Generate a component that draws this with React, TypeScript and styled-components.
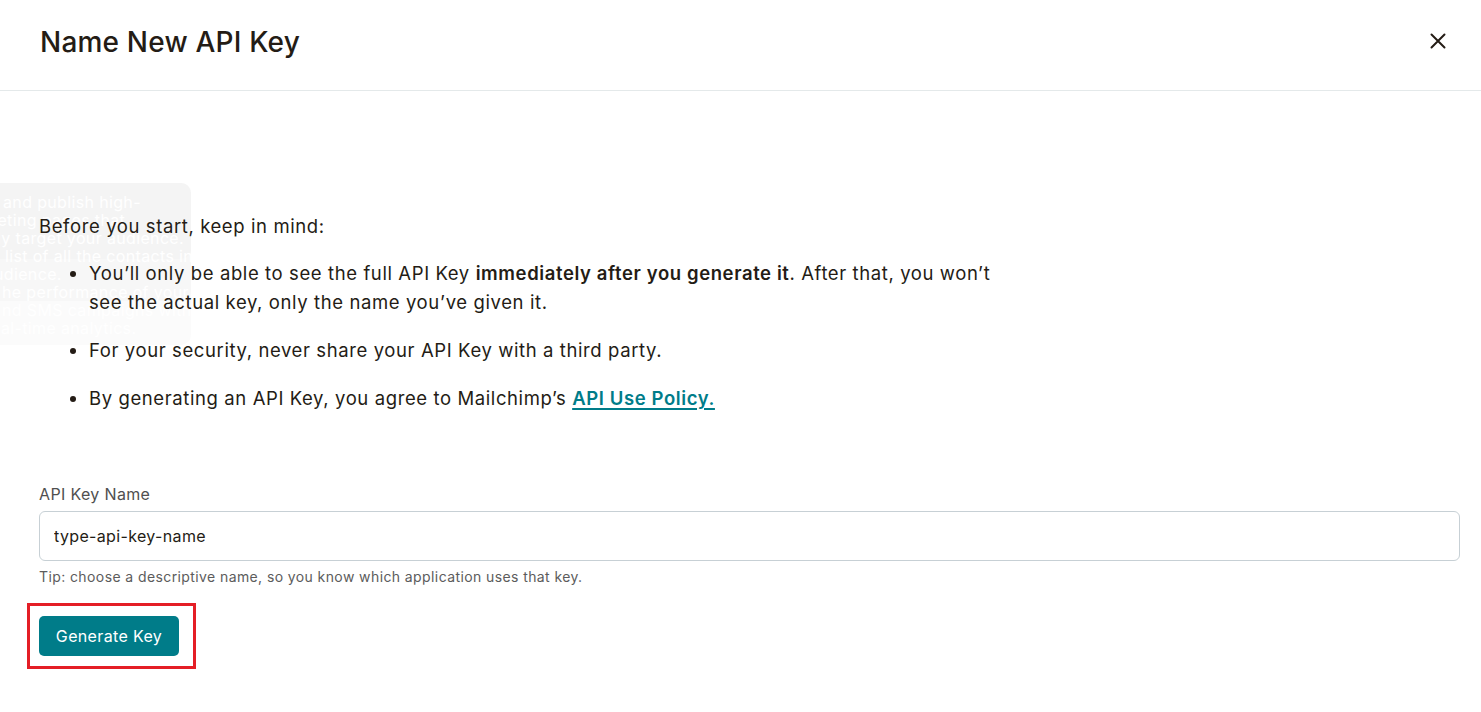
import styled, { createGlobalStyle } from "styled-components";

const GlobalStyle = createGlobalStyle`
  body {
    margin: 0;
    background: #ffffff;
    font-family: Inter, "Noto Sans", "Liberation Sans", sans-serif;
    color: #241c15;
    letter-spacing: 0.35px;
  }
`;

const PageStyled = styled.div`
  position: relative;
  width: 1481px;
  height: 712px;
  overflow: hidden;
  background: #ffffff;
`;

const HeaderStyled = styled.header`
  height: 90px;
  border-bottom: 1px solid #e4e9ea;
  display: flex;
  align-items: center;
  justify-content: space-between;
  padding: 0 31px 0 40px;
`;

const TitleStyled = styled.h1`
  margin: -7px 0 0 0;
  font-size: 28px;
  font-weight: 500;
  letter-spacing: 0.2px;
  color: #241c15;
`;

const CloseButtonStyled = styled.button`
  width: 24px;
  height: 24px;
  border: none;
  background: none;
  padding: 0;
  display: flex;
  align-items: center;
  justify-content: center;
  cursor: pointer;
  margin-top: -8px;
`;

const GhostStackStyled = styled.div`
  position: absolute;
  left: 0;
  top: 183px;
  width: 191px;
  z-index: 0;
  pointer-events: none;
`;

const GhostCardStyled = styled.div<{ $height: number; $shade: string }>`
  position: absolute;
  left: 0;
  top: 0;
  width: 191px;
  height: ${(p) => p.$height}px;
  background: ${(p) => p.$shade};
  border-radius: 0 10px 10px 0;
`;

const GhostTextStyled = styled.div`
  position: absolute;
  left: 0;
  top: 10px;
  width: 191px;
  overflow: hidden;
  font-size: 16px;
  line-height: 18px;
  color: #ffffff;
  white-space: nowrap;
`;

const GhostLineStyled = styled.div<{ $indent: number }>`
  margin-left: ${(p) => p.$indent}px;
`;

const MainStyled = styled.main`
  position: relative;
  z-index: 1;
  padding: 121px 40px 0 39px;
`;

const IntroStyled = styled.p`
  margin: 0 0 18px 0;
  font-size: 18.5px;
  letter-spacing: 0.6px;
  line-height: 29px;
`;

const ListStyled = styled.ul`
  margin: 0;
  padding-left: 50px;
  max-width: 910px;
`;

const ListItemStyled = styled.li`
  font-size: 18.5px;
  letter-spacing: 0.6px;
  line-height: 29px;
  margin-bottom: 19px;
`;

const StrongStyled = styled.strong`
  font-weight: 600;
`;

const LinkStyled = styled.a`
  color: #007c89;
  font-weight: 600;
  text-decoration: underline;
  text-decoration-thickness: 2px;
  text-underline-offset: 3px;
`;

const FieldStyled = styled.div`
  margin-top: 69px;
  display: flex;
  flex-direction: column;
`;

const LabelStyled = styled.label`
  font-size: 16px;
  line-height: 24px;
  color: #4f4f4f;
  margin-bottom: 5px;
`;

const InputStyled = styled.input`
  box-sizing: border-box;
  width: 1421px;
  height: 50px;
  border: 1px solid #c7d0d5;
  border-radius: 6px;
  padding: 0 14px;
  font-family: inherit;
  font-size: 16px;
  letter-spacing: 0.35px;
  color: #241c15;
  outline: none;
`;

const TipStyled = styled.span`
  margin-top: 6px;
  font-size: 14px;
  line-height: 20px;
  letter-spacing: 0.4px;
  color: #5c5c5c;
`;

const ActionStyled = styled.div`
  position: relative;
  display: inline-flex;
  margin-top: 29px;

  &::after {
    content: "";
    position: absolute;
    left: -12px;
    right: -17px;
    top: -13px;
    bottom: -13px;
    border: 3px solid #e41e26;
    pointer-events: none;
  }
`;

const PrimaryButtonStyled = styled.button`
  width: 140px;
  height: 40px;
  border: none;
  border-radius: 5px;
  background: #007c89;
  color: #ffffff;
  font-family: inherit;
  font-size: 16px;
  letter-spacing: 0.35px;
  cursor: pointer;
`;

const ghostLines = [
  { text: "and publish high-", indent: 3 },
  { text: "rketing pages that", indent: -18 },
  { text: "ly target your audience.", indent: -3 },
  { text: "list of all the contacts in", indent: 5 },
  { text: "udience.", indent: -6 },
  { text: "he performance of your", indent: 2 },
  { text: "nd SMS campaigns with", indent: 2 },
  { text: "al-time analytics.", indent: 1 },
];

const App = () => {
  return (
    <PageStyled>
      <GlobalStyle />
      <HeaderStyled>
        <TitleStyled>Name New API Key</TitleStyled>
        <CloseButtonStyled aria-label="Close">
          <svg width="16" height="16" viewBox="0 0 16 16">
            <path
              d="M1.5 1.5 L14.5 14.5 M14.5 1.5 L1.5 14.5"
              stroke="#241c15"
              strokeWidth="2"
              strokeLinecap="round"
            />
          </svg>
        </CloseButtonStyled>
      </HeaderStyled>

      <GhostStackStyled>
        <GhostCardStyled $height={162} $shade="rgba(244,244,244,0.4)" />
        <GhostCardStyled $height={118} $shade="rgba(242,242,242,0.35)" />
        <GhostCardStyled $height={76} $shade="rgba(240,240,240,0.45)" />
        <GhostTextStyled>
          {ghostLines.map((line) => (
            <GhostLineStyled key={line.text} $indent={line.indent}>
              {line.text}
            </GhostLineStyled>
          ))}
        </GhostTextStyled>
      </GhostStackStyled>

      <MainStyled>
        <IntroStyled>Before you start, keep in mind:</IntroStyled>
        <ListStyled>
          <ListItemStyled>
            You’ll only be able to see the full API Key{" "}
            <StrongStyled>immediately after you generate it</StrongStyled>.
            After that, you won’t see the actual key, only the name you’ve
            given it.
          </ListItemStyled>
          <ListItemStyled>
            For your security, never share your API Key with a third party.
          </ListItemStyled>
          <ListItemStyled>
            By generating an API Key, you agree to Mailchimp’s{" "}
            <LinkStyled href="#">API Use Policy.</LinkStyled>
          </ListItemStyled>
        </ListStyled>

        <FieldStyled>
          <LabelStyled htmlFor="api-key-name">API Key Name</LabelStyled>
          <InputStyled id="api-key-name" defaultValue="type-api-key-name" />
          <TipStyled>
            Tip: choose a descriptive name, so you know which application uses
            that key.
          </TipStyled>
        </FieldStyled>

        <ActionStyled>
          <PrimaryButtonStyled>Generate Key</PrimaryButtonStyled>
        </ActionStyled>
      </MainStyled>
    </PageStyled>
  );
};

export default App;
